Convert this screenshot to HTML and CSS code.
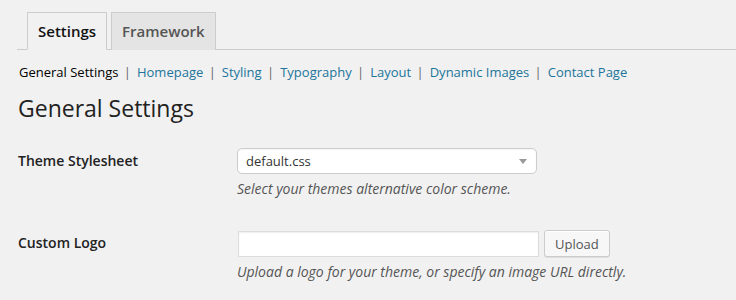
FILE: index.html
```html
<!DOCTYPE html>
<html lang="en">
<head>
  <meta charset="UTF-8" />
  <title>Theme Options</title>
  <link rel="stylesheet" href="styles.css">
</head>
<body>

  <div class="wrap">
    <!-- Tabs -->
    <h2 class="nav-tabs">
      <a class="nav-tab active" href="#">Settings</a>
      <a class="nav-tab" href="#">Framework</a>
    </h2>

    <!-- Sub navigation -->
    <ul class="subsubsub">
      <li><span class="current">General Settings</span> |</li>
      <li><a href="#">Homepage</a> |</li>
      <li><a href="#">Styling</a> |</li>
      <li><a href="#">Typography</a> |</li>
      <li><a href="#">Layout</a> |</li>
      <li><a href="#">Dynamic Images</a> |</li>
      <li><a href="#">Contact Page</a></li>
    </ul>

    <h3 class="section-title">General Settings</h3>

    <div class="form-table">
      <div class="form-row">
        <label class="row-label">Theme Stylesheet</label>
        <div class="row-field">
          <div class="select-wrap">
            <select class="select">
              <option>default.css</option>
            </select>
            <span class="select-arrow"></span>
          </div>
          <p class="description">Select your themes alternative color scheme.</p>
        </div>
      </div>

      <div class="form-row">
        <label class="row-label">Custom Logo</label>
        <div class="row-field">
          <div class="upload-line">
            <input type="text" class="text-input" />
            <button class="button">Upload</button>
          </div>
          <p class="description">Upload a logo for your theme, or specify an image URL directly.</p>
        </div>
      </div>
    </div>
  </div>

</body>
</html>
```

FILE: styles.css
```css
* {
  margin: 0;
  padding: 0;
  box-sizing: border-box;
}

body {
  background: #f1f1f1;
  font-family: 'Open Sans', sans-serif;
  font-size: 13px;
  color: #222;
}

.wrap {
  padding: 12px 0 0 17px;
}

/* Tabs */
.nav-tabs {
  display: flex;
  gap: 4px;
  padding-left: 10px;
  border-bottom: 1px solid #ccc;
  font-weight: 600;
  font-size: 15px;
  line-height: 24px;
}

.nav-tab {
  display: block;
  padding: 6px 10px 6px;
  border: 1px solid #ccc;
  border-bottom: none;
  margin-bottom: -1px;
  background: #e4e4e4;
  color: #555;
  text-decoration: none;
  height: 38px;
}

.nav-tab.active {
  background: #f1f1f1;
  color: #111;
  border-bottom: 1px solid #f1f1f1;
}

/* Sub nav */
.subsubsub {
  list-style: none;
  display: flex;
  margin-top: 12px;
  padding-left: 2px;
  line-height: 20px;
  color: #666;
}

.subsubsub li {
  margin-right: 6px;
}

.subsubsub a {
  color: #21759b;
  text-decoration: none;
  margin-right: 2px;
}

.subsubsub .current {
  color: #000;
  margin-right: 2px;
}

.section-title {
  font-size: 23px;
  font-weight: 400;
  line-height: 30px;
  margin-top: 11px;
  padding-left: 1px;
  color: #222;
}

/* Form */
.form-table {
  margin-top: 25px;
}

.form-row {
  display: flex;
  margin-bottom: 32px;
}

.row-label {
  width: 220px;
  padding: 5px 0 0 1px;
  font-size: 14px;
  font-weight: 600;
  color: #222;
  line-height: 16px;
}

.row-field {
  width: 440px;
}

.select-wrap {
  position: relative;
  width: 300px;
}

.select {
  appearance: none;
  -webkit-appearance: none;
  width: 300px;
  height: 26px;
  border: 1px solid #ccc;
  border-radius: 5px;
  background: #fff;
  font-family: 'Open Sans', sans-serif;
  font-size: 13px;
  color: #333;
  padding: 0 8px;
  box-shadow: inset 0 1px 2px rgba(0,0,0,0.04);
}

.select-arrow {
  position: absolute;
  right: 10px;
  top: 11px;
  border-left: 4px solid transparent;
  border-right: 4px solid transparent;
  border-top: 5px solid #999;
}

.description {
  font-size: 14px;
  font-style: italic;
  color: #555;
  margin-top: 5px;
  line-height: 19px;
}

.upload-line {
  display: flex;
  align-items: center;
  gap: 5px;
  padding-left: 1px;
}

.text-input {
  width: 301px;
  height: 26px;
  border: 1px solid #ddd;
  background: #fff;
  box-shadow: inset 0 1px 2px rgba(0,0,0,0.07);
}

.button {
  height: 27px;
  padding: 0 10px;
  border: 1px solid #ccc;
  border-radius: 3px;
  background: #f7f7f7;
  color: #555;
  font-family: 'Open Sans', sans-serif;
  font-size: 13px;
  box-shadow: 0 1px 0 #fff inset, 0 1px 0 rgba(0,0,0,0.08);
}
```
